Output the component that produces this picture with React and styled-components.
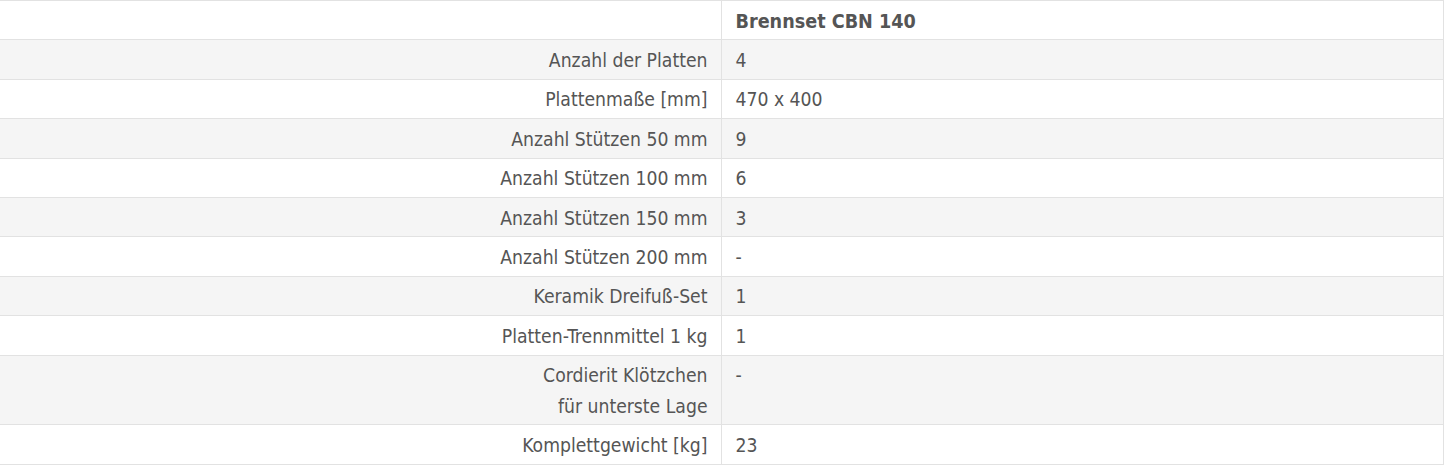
import React from "react";
import styled, { createGlobalStyle } from "styled-components";

const Global = createGlobalStyle`
  html, body { margin: 0; padding: 0; background: #fff; }
  body { font-family: "DejaVu Sans Condensed", "DejaVu Sans", Tahoma, sans-serif; }
`;

const Table = styled.table`
  width: 1444px;
  border-collapse: collapse;
  table-layout: fixed;
  font-size: 19.2px;
  line-height: 30.4px;
  color: #555;
`;

const Row = styled.tr`
  background: ${(p) => (p.$striped ? "#f5f5f5" : "#fff")};
`;

const LabelCell = styled.td`
  width: 721px;
  box-sizing: border-box;
  text-align: right;
  vertical-align: top;
  padding: 5.5px 13px 2.5px 8px;
  border-top: 1px solid #e2e2e2;
  border-bottom: 1px solid #e2e2e2;
  border-right: 1px solid #e2e2e2;
`;

const ValueCell = styled.td`
  text-align: left;
  vertical-align: top;
  padding: 5.5px 14px 2.5px;
  border: 1px solid #e2e2e2;
  font-weight: ${(p) => (p.$bold ? 700 : 400)};
  font-size: ${(p) => (p.$bold ? "19.6px" : "inherit")};
`;

const rows = [
  ["Anzahl der Platten", "4"],
  ["Plattenmaße [mm]", "470 x 400"],
  ["Anzahl Stützen 50 mm", "9"],
  ["Anzahl Stützen 100 mm", "6"],
  ["Anzahl Stützen 150 mm", "3"],
  ["Anzahl Stützen 200 mm", "-"],
  ["Keramik Dreifuß-Set", "1"],
  ["Platten-Trennmittel 1 kg", "1"],
  [["Cordierit Klötzchen", "für unterste Lage"], "-"],
  ["Komplettgewicht [kg]", "23"],
];

export default function App() {
  return (
    <>
      <Global />
      <Table>
        <tbody>
          <Row>
            <LabelCell></LabelCell>
            <ValueCell $bold>Brennset CBN 140</ValueCell>
          </Row>
          {rows.map(([label, value], i) => (
            <Row key={i} $striped={i % 2 === 0}>
              <LabelCell>
                {Array.isArray(label)
                  ? label.map((l, j) => (
                      <React.Fragment key={j}>
                        {j > 0 && <br />}
                        {l}
                      </React.Fragment>
                    ))
                  : label}
              </LabelCell>
              <ValueCell>{value}</ValueCell>
            </Row>
          ))}
        </tbody>
      </Table>
    </>
  );
}
